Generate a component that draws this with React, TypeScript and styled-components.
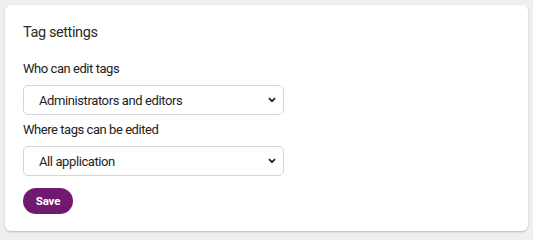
import React from "react";
import styled, { createGlobalStyle } from "styled-components";

const GlobalStyle = createGlobalStyle`
  html, body {
    margin: 0;
    padding: 0;
    background: #f0efee;
  }
  body {
    font-family: Roboto, "Noto Sans", sans-serif;
    color: #222;
  }
`;

const Page = styled.div`
  padding: 5px 5px 6px 5px;
`;

const Card = styled.section`
  background: #fff;
  border-radius: 6px;
  box-shadow: 0 1px 2px rgba(0, 0, 0, 0.22);
  padding: 18px 18px 17px;
  display: flex;
  flex-direction: column;
  align-items: flex-start;
`;

const Title = styled.h2`
  margin: 0 0 17px;
  font-size: 14.5px;
  line-height: 20px;
  font-weight: 400;
  letter-spacing: -0.4px;
  color: #2b2b2b;
`;

const Field = styled.div`
  display: flex;
  flex-direction: column;
  gap: 8px;
  margin-bottom: 6px;
`;

const Label = styled.label`
  font-size: 13px;
  line-height: 17px;
  letter-spacing: -0.45px;
  color: #222;
`;

const SelectWrap = styled.div`
  position: relative;
  width: 261px;
`;

const Select = styled.select`
  appearance: none;
  width: 100%;
  height: 30px;
  padding: 0 28px 0 15px;
  border: 1px solid #d6d6d6;
  border-radius: 5px;
  background: #fff;
  font-family: inherit;
  font-size: 13px;
  letter-spacing: -0.4px;
  color: #1e1e1e;
  outline: none;
`;

const Chevron = styled.svg`
  position: absolute;
  right: 8px;
  top: 50%;
  margin-top: -3px;
  width: 8px;
  height: 6px;
  pointer-events: none;
`;

const SaveButton = styled.button`
  margin-top: 6px;
  height: 26px;
  width: 50px;
  padding: 0;
  border: none;
  border-radius: 13px;
  background: #6f1a70;
  color: #fff;
  font-family: inherit;
  font-size: 11.5px;
  font-weight: 700;
  letter-spacing: -0.2px;
  cursor: pointer;
`;

const SelectField = ({
  label,
  value,
  options,
}: {
  label: string;
  value: string;
  options: string[];
}) => (
  <Field>
    <Label>{label}</Label>
    <SelectWrap>
      <Select defaultValue={value}>
        {options.map((o) => (
          <option key={o}>{o}</option>
        ))}
      </Select>
      <Chevron viewBox="0 0 8 6">
        <path d="M1 1.2 L4 4.2 L7 1.2" fill="none" stroke="#222" strokeWidth="1.8" />
      </Chevron>
    </SelectWrap>
  </Field>
);

export default function App() {
  return (
    <Page>
      <GlobalStyle />
      <Card>
        <Title>Tag settings</Title>
        <SelectField
          label="Who can edit tags"
          value="Administrators and editors"
          options={["Administrators", "Administrators and editors", "Everyone"]}
        />
        <SelectField
          label="Where tags can be edited"
          value="All application"
          options={["All application", "Settings only"]}
        />
        <SaveButton>Save</SaveButton>
      </Card>
    </Page>
  );
}
